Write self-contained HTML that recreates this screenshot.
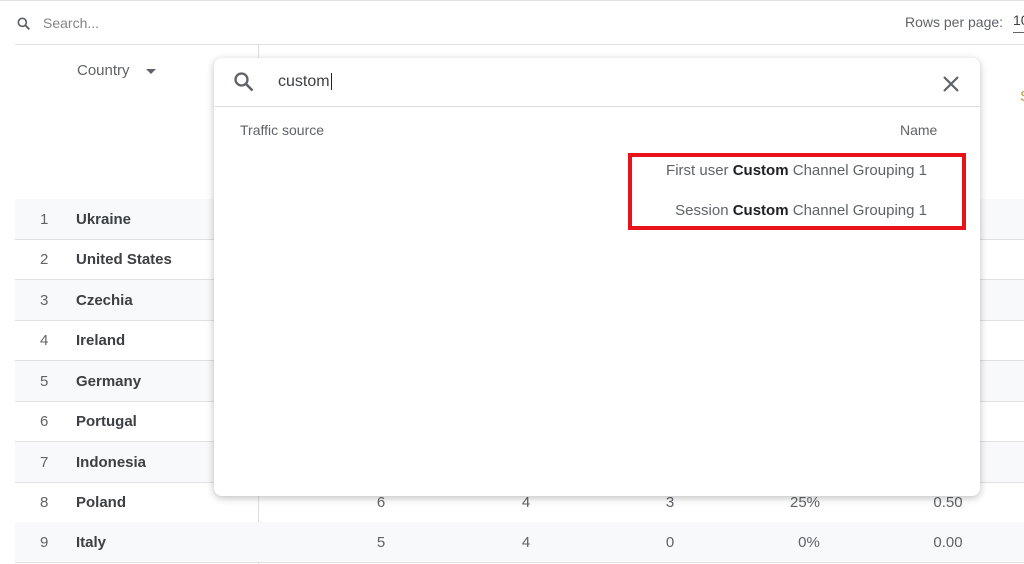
<!DOCTYPE html>
<html><head><style>
body{margin:0;width:1024px;height:564px;overflow:hidden;background:#fff;font-family:"Liberation Sans",sans-serif;position:relative;color:#202124}
.a{position:absolute}
.row{position:absolute;left:15px;width:1009px;height:40px;border-bottom:1px solid #e0e0e0;font-size:15px}
.row.s{background:#f8f9fa}
.row .n{position:absolute;left:25px;top:12px;color:#5f6368}
.row .c{position:absolute;left:61px;top:12px;font-weight:bold;color:#3c4043}
.row .v{position:absolute;top:12px;color:#5f6368;width:60px;text-align:center}
</style></head><body>
<div class="a" style="left:0;top:0;width:1024px;height:1px;background:#e0e0e0"></div>
<svg class="a" style="left:16px;top:16px" width="16" height="16" viewBox="0 0 24 24"><circle cx="9.5" cy="9.5" r="6" fill="none" stroke="#5f6368" stroke-width="2.5"/><path d="M14 14l6 6" stroke="#5f6368" stroke-width="2.8"/></svg>
<div class="a" style="left:43px;top:15px;font-size:14px;color:#80868b">Search...</div>
<div class="a" style="left:905px;top:14px;font-size:14px;color:#5f6368">Rows per page:</div>
<div class="a" style="left:1013px;top:12px;font-size:14px;color:#3c4043;border-bottom:1px solid #5f6368;padding-bottom:4px">10</div>
<div class="a" style="left:15px;top:44px;width:1009px;height:1px;background:#e0e0e0"></div>
<div class="a" style="left:258px;top:45px;width:1px;height:519px;background:#e0e0e0"></div>
<div class="a" style="left:77px;top:62px;font-size:15px;color:#5f6368">Country</div>
<div class="a" style="left:146px;top:69px;width:0;height:0;border-left:5px solid transparent;border-right:5px solid transparent;border-top:5px solid #5f6368"></div>
<div class="a" style="left:1020px;top:88px;font-size:15px;color:#b0a040">S</div>

<div class="row s" style="top:199px"><span class="n">1</span><span class="c">Ukraine</span></div>
<div class="row" style="top:239px"><span class="n">2</span><span class="c">United States</span></div>
<div class="row s" style="top:280px"><span class="n">3</span><span class="c">Czechia</span></div>
<div class="row" style="top:320px"><span class="n">4</span><span class="c">Ireland</span></div>
<div class="row s" style="top:361px"><span class="n">5</span><span class="c">Germany</span></div>
<div class="row" style="top:401px"><span class="n">6</span><span class="c">Portugal</span></div>
<div class="row s" style="top:442px"><span class="n">7</span><span class="c">Indonesia</span></div>
<div class="row" style="top:482px"><span class="n">8</span><span class="c">Poland</span><span class="v" style="left:336px">6</span><span class="v" style="left:481px">4</span><span class="v" style="left:625px">3</span><span class="v" style="left:760px">25%</span><span class="v" style="left:903px">0.50</span></div>
<div class="row s" style="top:522px"><span class="n">9</span><span class="c">Italy</span><span class="v" style="left:336px">5</span><span class="v" style="left:481px">4</span><span class="v" style="left:625px">0</span><span class="v" style="left:764px">0%</span><span class="v" style="left:903px">0.00</span></div>

<div class="a" style="left:214px;top:58px;width:766px;height:438px;background:#fff;border-radius:8px;box-shadow:0 2px 8px rgba(0,0,0,.25)">
<svg class="a" style="left:18px;top:12px" width="24" height="24" viewBox="0 0 24 24"><circle cx="9.5" cy="9.5" r="6" fill="none" stroke="#5f6368" stroke-width="2.3"/><path d="M14 14l6.5 6.5" stroke="#5f6368" stroke-width="2.6"/></svg>
<div class="a" style="left:64px;top:15px;font-size:16px;color:#3c4043">custom<span style="border-left:1px solid #202124;margin-left:1px"></span></div>
<svg class="a" style="left:727px;top:16px" width="20" height="20" viewBox="0 0 20 20"><path d="M3 3L17 17M17 3L3 17" stroke="#5f6368" stroke-width="2.2"/></svg>
<div class="a" style="left:0;top:48px;width:766px;height:1px;background:#e0e0e0"></div>
<div class="a" style="left:26px;top:64px;font-size:14px;color:#5f6368">Traffic source</div>
<div class="a" style="left:686px;top:64px;font-size:14px;color:#5f6368">Name</div>
<div class="a" style="right:53px;top:104px;font-size:15px;color:#5f6368;white-space:nowrap">First user <b style="color:#202124">Custom</b> Channel Grouping 1</div>
<div class="a" style="right:53px;top:144px;font-size:15px;color:#5f6368;white-space:nowrap">Session <b style="color:#202124">Custom</b> Channel Grouping 1</div>
<div class="a" style="left:414px;top:95px;width:330px;height:69px;border:4px solid #e8121b"></div>
</div>
</body></html>
